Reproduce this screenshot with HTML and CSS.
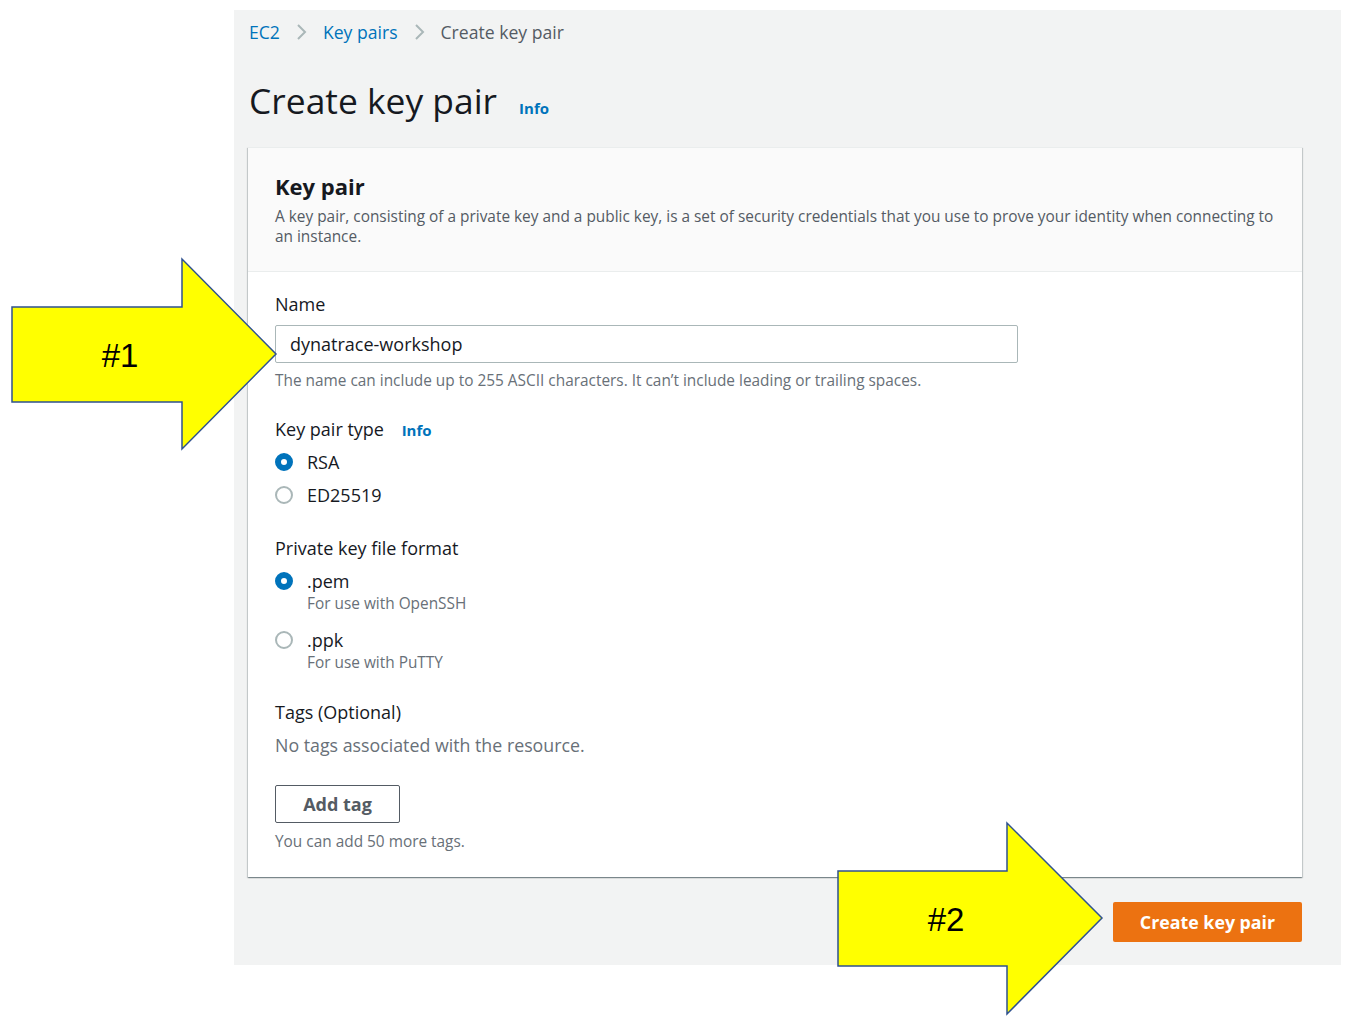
FILE: index.html
```html
<!DOCTYPE html>
<html lang="en">
<head>
<meta charset="utf-8">
<title>Create key pair</title>
<link rel="stylesheet" href="styles.css">
</head>
<body>
<div class="panel">
  <nav class="crumbs">
    <a class="crumb-link">EC2</a>
    <svg class="chev" width="12" height="18" viewBox="0 0 12 18"><path d="M2 2 L9 9 L2 16" fill="none" stroke="#aab7b8" stroke-width="2"/></svg>
    <a class="crumb-link">Key pairs</a>
    <svg class="chev" width="12" height="18" viewBox="0 0 12 18"><path d="M2 2 L9 9 L2 16" fill="none" stroke="#aab7b8" stroke-width="2"/></svg>
    <span class="crumb-current">Create key pair</span>
  </nav>
  <div class="title-row">
    <h1 class="title">Create key pair</h1>
    <a class="info info-title">Info</a>
  </div>
  <section class="card">
    <div class="card-head">
      <h2 class="card-title">Key pair</h2>
      <p class="card-desc">A key pair, consisting of a private key and a public key, is a set of security credentials that you use to prove your identity when connecting to an instance.</p>
    </div>
    <div class="card-body">
      <div class="field">
        <div class="label">Name</div>
        <div class="input">dynatrace-workshop</div>
        <div class="hint">The name can include up to 255 ASCII characters. It can’t include leading or trailing spaces.</div>
      </div>
      <div class="field gap-type">
        <div class="label">Key pair type <a class="info info-label">Info</a></div>
        <div class="radios">
          <div class="radio-row"><span class="radio checked"></span><span class="radio-text">RSA</span></div>
          <div class="radio-row"><span class="radio"></span><span class="radio-text">ED25519</span></div>
        </div>
      </div>
      <div class="field gap-format">
        <div class="label">Private key file format</div>
        <div class="radios radios-desc">
          <div class="radio-row"><span class="radio checked"></span><div><div class="radio-text">.pem</div><div class="radio-sub">For use with OpenSSH</div></div></div>
          <div class="radio-row"><span class="radio"></span><div><div class="radio-text">.ppk</div><div class="radio-sub">For use with PuTTY</div></div></div>
        </div>
      </div>
      <div class="field gap-tags">
        <div class="label">Tags (Optional)</div>
        <div class="empty">No tags associated with the resource.</div>
        <button class="btn-normal">Add tag</button>
        <div class="hint hint-tags">You can add 50 more tags.</div>
      </div>
    </div>
  </section>
  <div class="actions">
    <button class="btn-primary">Create key pair</button>
  </div>
</div>

<svg class="arrow arrow-one" width="290" height="210" viewBox="0 250 290 210">
  <polygon points="12,307 182,307 182,259 276,354 182,449 182,402 12,402" fill="#ffff00" stroke="#2f528f" stroke-width="1.5"/>
  <text x="120" y="367" text-anchor="middle" class="arrow-label">#1</text>
</svg>
<svg class="arrow arrow-two" width="290" height="210" viewBox="830 815 290 210">
  <polygon points="838,871 1007,871 1007,823 1102,918 1007,1014 1007,966 838,966" fill="#ffff00" stroke="#2f528f" stroke-width="1.5"/>
  <text x="946" y="931" text-anchor="middle" class="arrow-label">#2</text>
</svg>
</body>
</html>
```
FILE: styles.css
```css
* { box-sizing: border-box; }
html, body { margin: 0; padding: 0; background: #ffffff; }
body {
  position: relative;
  width: 1368px;
  height: 1024px;
  font-family: "Open Sans", "Noto Sans", sans-serif;
  color: #16191f;
  overflow: hidden;
}
.panel {
  margin: 10px 0 0 234px;
  width: 1107px;
  height: 955px;
  background: #f2f3f3;
  padding: 10px 39px 0 14px;
}
.crumbs {
  display: flex;
  align-items: center;
  height: 24px;
  padding-left: 1px;
  font-size: 17.6px;
  line-height: 24px;
}
.crumb-link { color: #0073bb; }
.chev { margin: 0 15px 0 16px; }
.crumb-current { color: #545b64; }
.title-row {
  display: flex;
  align-items: baseline;
  margin-top: 34px;
  padding-left: 1px;
  height: 44px;
}
.title {
  margin: 0;
  font-size: 35.4px;
  line-height: 44px;
  font-weight: 400;
  color: #16191f;
}
.info {
  color: #0073bb;
  font-weight: 700;
  font-size: 15px;
}
.info-title { margin-left: 22px; }
.info-label { margin-left: 13px; }
.card {
  margin-top: 25px;
  background: #ffffff;
  box-shadow: 0 1px 1px 0 rgba(0,28,36,.3), 1px 1px 1px 0 rgba(0,28,36,.15), -1px 1px 1px 0 rgba(0,28,36,.15);
  border-top: 1px solid #eaeded;
}
.card-head {
  background: #fafafa;
  padding: 24px 27px 24px 27px;
  border-bottom: 1px solid #eaeded;
}
.card-title {
  margin: 0;
  font-size: 22px;
  line-height: 28px;
  font-weight: 700;
}
.card-desc {
  margin: 7px 0 0 0;
  font-size: 15.4px;
  line-height: 20px;
  color: #545b64;
}
.card-body {
  padding: 21px 27px 25px 27px;
}
.label {
  font-size: 18px;
  line-height: 22px;
  color: #16191f;
}
.input {
  margin-top: 10px;
  width: 743px;
  height: 38px;
  border: 1px solid #aab7b8;
  border-radius: 2px;
  padding: 0 14px;
  font-size: 18px;
  line-height: 36px;
  color: #16191f;
  background: #fff;
}
.hint {
  margin-top: 8px;
  font-size: 15.4px;
  line-height: 20px;
  color: #687078;
}
.hint-tags { margin-top: 9px; }
.gap-type { margin-top: 27px; }
.gap-format { margin-top: 30px; }
.gap-tags { margin-top: 28px; }
.radios {
  display: flex;
  flex-direction: column;
  gap: 9px;
  margin-top: 9px;
}
.radios-desc { margin-top: 10px; gap: 14px; }
.radio-row {
  display: flex;
  align-items: flex-start;
  gap: 14px;
}
.radio {
  flex: none;
  width: 18px;
  height: 18px;
  margin-top: 3px;
  border-radius: 50%;
  border: 2px solid #aab7b8;
  background: #fff;
}
.radio.checked {
  border: 6px solid #0073bb;
}
.radio-text {
  font-size: 18px;
  line-height: 24px;
  color: #16191f;
}
.radio-sub {
  margin-top: 1px;
  font-size: 15.4px;
  line-height: 20px;
  color: #687078;
}
.empty {
  margin-top: 10px;
  font-size: 17.8px;
  line-height: 24px;
  color: #687078;
}
.btn-normal {
  display: block;
  margin-top: 28px;
  width: 125px;
  height: 38px;
  background: #fff;
  border: 1px solid #545b64;
  border-radius: 2px;
  font-family: inherit;
  font-size: 18px;
  font-weight: 700;
  color: #545b64;
  padding: 0;
}
.actions {
  display: flex;
  justify-content: flex-end;
  margin-top: 25px;
}
.btn-primary {
  width: 189px;
  height: 40px;
  background: #ec7211;
  border: none;
  border-radius: 2px;
  font-family: inherit;
  font-size: 17.8px;
  font-weight: 700;
  color: #ffffff;
  padding: 0;
}
.arrow { position: absolute; }
.arrow-one { left: 0; top: 250px; }
.arrow-two { left: 830px; top: 815px; }
.arrow-label {
  font-family: "Liberation Sans", Arial, sans-serif;
  font-size: 33px;
  fill: #000;
}
```
